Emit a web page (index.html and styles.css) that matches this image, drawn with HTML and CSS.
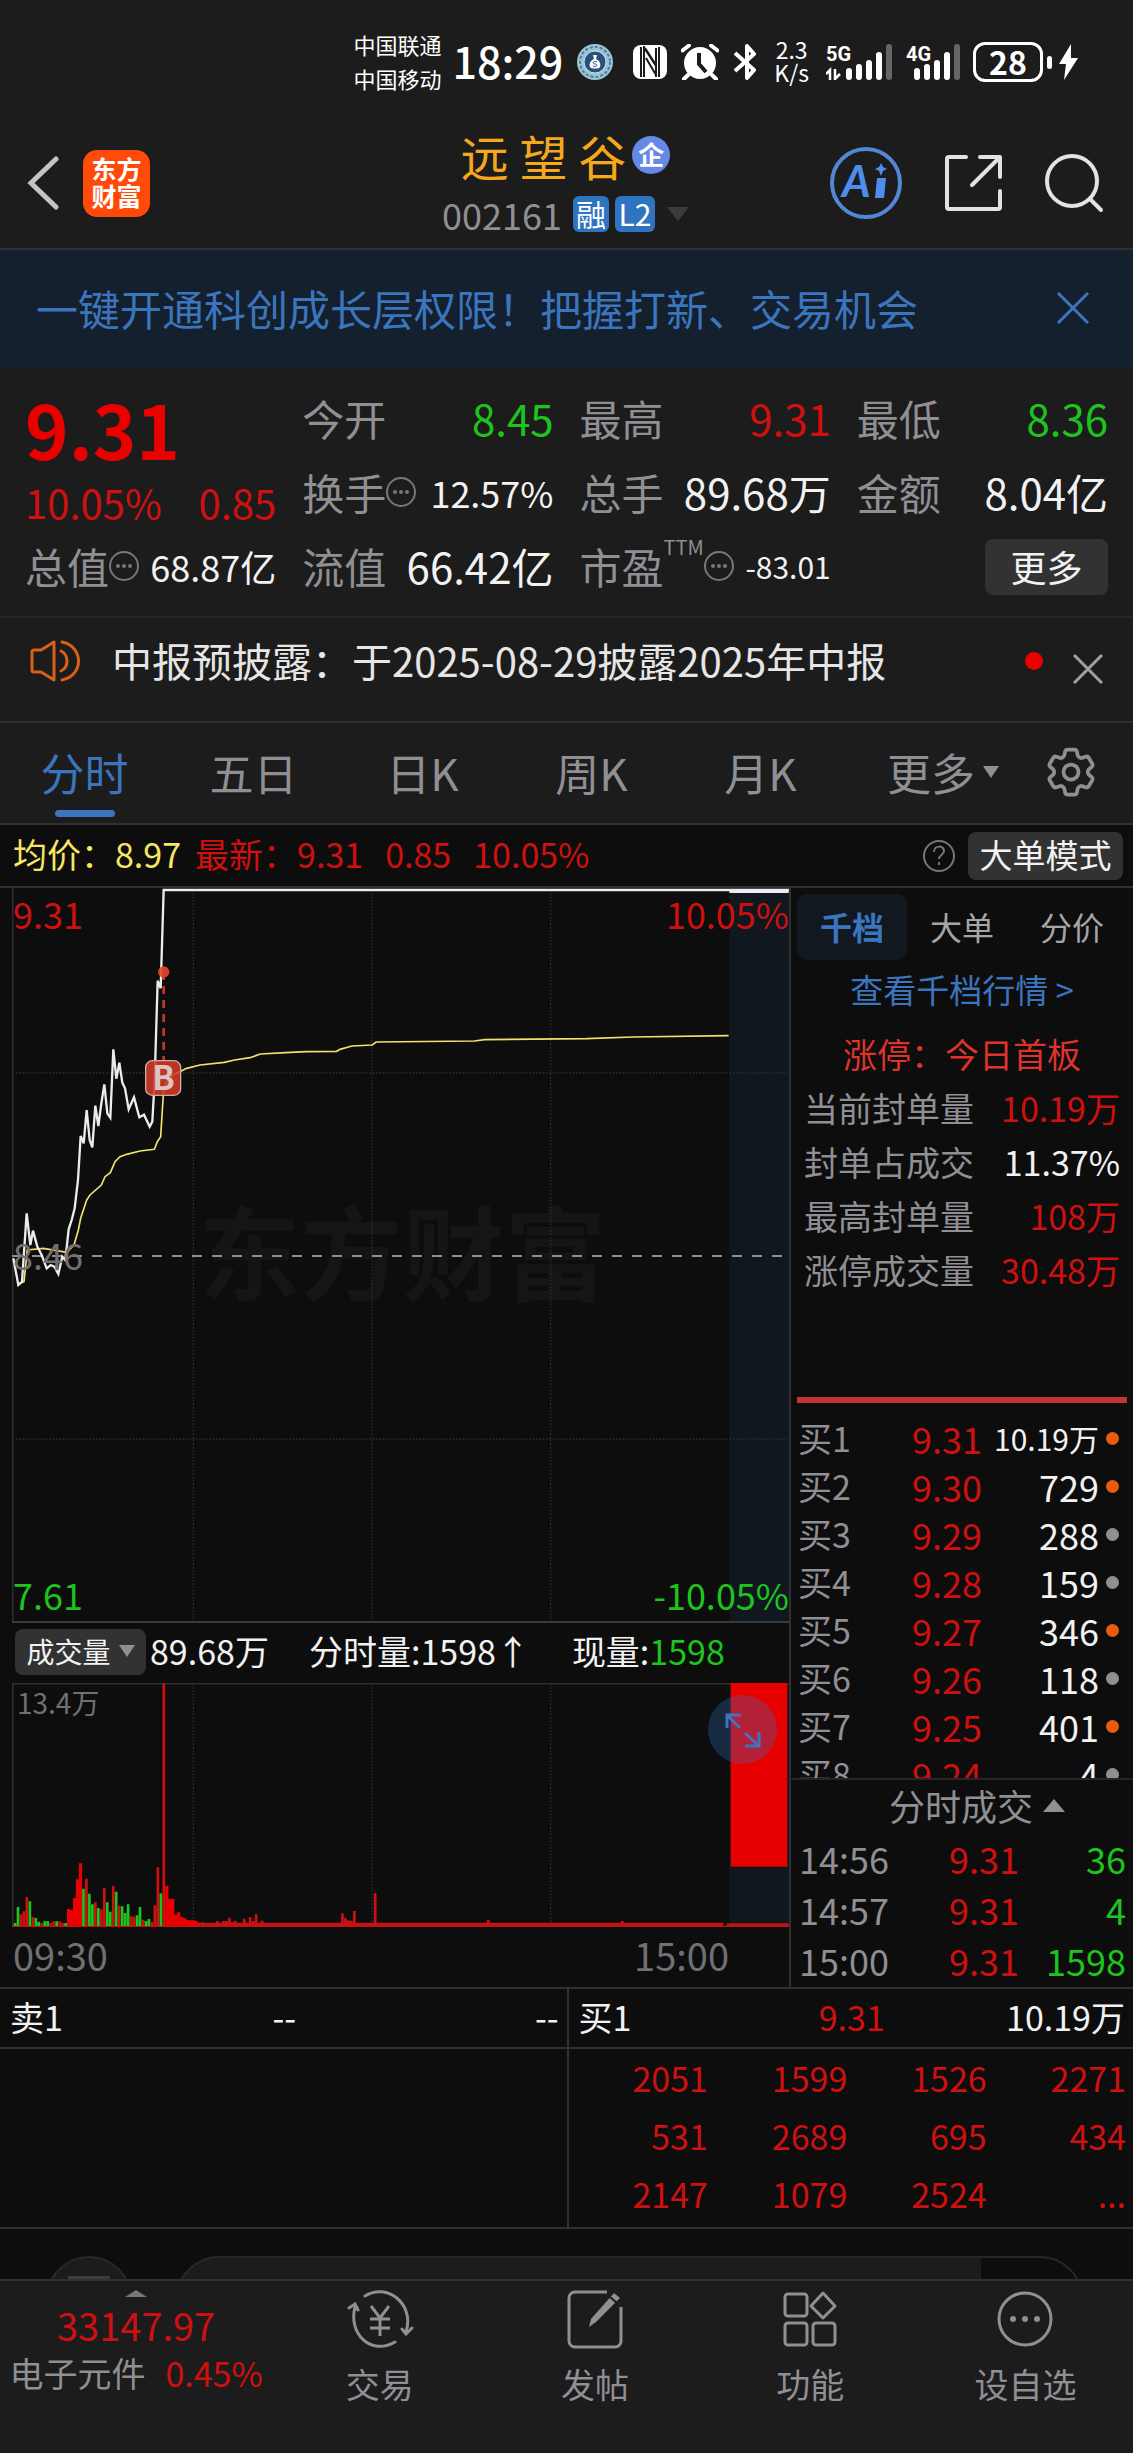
FILE: index.html
```html
<!DOCTYPE html>
<html lang="zh-CN">
<head>
<meta charset="utf-8">
<meta name="viewport" content="width=device-width, initial-scale=1">
<title>远望谷 002161</title>
<link rel="stylesheet" href="styles.css">
</head>
<body>
<div class="status">
  <div class="carriers"><span>中国联通</span><span>中国移动</span></div>
  <span class="clock">18:29</span>
  <svg class="st-badge" width="38" height="38" viewBox="0 0 38 38"><circle cx="19" cy="19" r="18" fill="#9cc4d6"/><circle cx="19" cy="19" r="15" fill="none" stroke="#4a7f9e" stroke-width="2" stroke-dasharray="3 2"/><circle cx="19" cy="19" r="11" fill="#2b4f7d" stroke="#cfe3ee" stroke-width="1"/><path d="M17 12h4l-1 4c4 2 5 5 4 8-1 2-9 2-10 0-1-3 0-6 4-8z" fill="#fff"/><path d="M21 19c-4-2-5 2-2 2s2 4-2 2" fill="none" stroke="#2b4f7d" stroke-width="1"/></svg>
  <svg class="st-nfc" width="34" height="34" viewBox="0 0 34 34"><rect width="34" height="34" rx="8" fill="#fff"/><path d="M8 2v30M26 2v30" stroke="#1c1c1c" stroke-width="2"/><path d="M11 1v31M12 4l11 17v11" stroke="#1c1c1c" stroke-width="2" fill="none"/><path d="M13 13l10 17M12 3l11 17V3" stroke="#1c1c1c" stroke-width="2" fill="none"/></svg>
  <svg class="st-alarm" width="38" height="36" viewBox="0 0 38 36"><circle cx="19" cy="19" r="16" fill="#fff"/><path d="M1.500 6.500L8 1.500M36.500 6.500L30 1.500M7 31l-4 4M31 31l4 4" stroke="#fff" stroke-width="4" stroke-linecap="round"/><path d="M18 9v11l7 8" fill="none" stroke="#1c1c1c" stroke-width="4"/></svg>
  <svg class="st-bt" width="24" height="36" viewBox="0 0 24 36"><path d="M2 9l19 17-7 8V2l7 8L2 27" fill="none" stroke="#fff" stroke-width="4" stroke-linejoin="round"/></svg>
  <div class="speed"><span>2.3</span><span>K/s</span></div>
  <svg class="st-5g" width="66" height="36" viewBox="0 0 66 36"><text x="0" y="17" class="net">5G</text><path d="M0 30l4-4v10M9 25v10l5-5" stroke="#fff" stroke-width="2.500" fill="none"/><g stroke="#fff" stroke-width="6" stroke-linecap="round"><path d="M23 27v6M33 23v10M43 19v14M53 11v22"/><path d="M63 3v30" stroke="#666"/></g></svg>
  <svg class="st-4g" width="54" height="36" viewBox="0 0 54 36"><text x="0" y="17" class="net">4G</text><g stroke="#fff" stroke-width="6" stroke-linecap="round"><path d="M11 27v6M21 23v10M31 19v14M41 11v22"/><path d="M51 3v30" stroke="#666"/></g></svg>
  <div class="battery"><span class="battery-body">28</span><i class="battery-tip"></i></div>
  <svg class="st-bolt" width="19" height="36" viewBox="0 0 19 36"><path d="M12 0L0 20h7L5 36 19 14h-7z" fill="#fff"/></svg>
</div>

<header class="header">
  <div class="header-left">
    <button class="icon-btn" aria-label="返回"><svg width="32" height="54" viewBox="0 0 32 54"><path d="M29 3L4 27l25 24" fill="none" stroke="#c4c4c4" stroke-width="5" stroke-linecap="round"/></svg></button>
    <div class="logo"><span>东方</span><span>财富</span></div>
  </div>
  <div class="stock">
    <h1 class="stock-name">远 望 谷<span class="corp">企</span></h1>
    <div class="stock-code">002161<span class="tag">融</span><span class="tag tag-wide">L2</span><i class="tri tri-dim"></i></div>
  </div>
  <div class="header-right">
    <button class="icon-btn" aria-label="AI"><svg width="72" height="72" viewBox="0 0 72 72"><circle cx="36" cy="36" r="34" fill="none" stroke="#5287d6" stroke-width="4"/><text x="12" y="50" class="ai">A</text><path d="M47 31h9l-2 20h-9z" fill="#4e8ded"/><path d="M51 16l2 4 4 2-4 2-2 5-2-5-4-2 4-2z" fill="#4e8ded"/></svg></button>
    <button class="icon-btn" aria-label="分享"><svg width="58" height="58" viewBox="0 0 58 58"><path d="M22 3H5a2 2 0 0 0-2 2v48a2 2 0 0 0 2 2h49a2 2 0 0 0 2-2V37M36 3h20v20M55 4L28 31" fill="none" stroke="#e3e3e3" stroke-width="4" stroke-linecap="round" stroke-linejoin="round"/></svg></button>
    <button class="icon-btn" aria-label="搜索"><svg width="60" height="60" viewBox="0 0 60 60"><circle cx="28" cy="28" r="25" fill="none" stroke="#e3e3e3" stroke-width="4"/><path d="M46 46l11 11" stroke="#e3e3e3" stroke-width="4" stroke-linecap="round"/></svg></button>
  </div>
</header>

<section class="banner">
  <a href="#open">一键开通科创成长层权限！把握打新、交易机会</a>
  <button class="icon-btn" aria-label="关闭"><svg width="32" height="32" viewBox="0 0 32 32"><path d="M1 1l30 30M31 1L1 31" stroke="#3a75bd" stroke-width="3"/></svg></button>
</section>

<section class="quote">
  <div class="price-block">
    <strong class="price">9.31</strong>
    <div class="change"><span>10.05%</span><span>0.85</span></div>
  </div>
  <div class="cell"><span class="k">今开</span><span class="v down">8.45</span></div>
  <div class="cell"><span class="k">最高</span><span class="v up">9.31</span></div>
  <div class="cell"><span class="k">最低</span><span class="v down">8.36</span></div>
  <div class="cell"><span class="k">换手<svg class="info" width="30" height="30" viewBox="0 0 30 30"><use href="#dots"/></svg></span><span class="v mid">12.57%</span></div>
  <div class="cell"><span class="k">总手</span><span class="v">89.68万</span></div>
  <div class="cell"><span class="k">金额</span><span class="v">8.04亿</span></div>
  <div class="cell"><span class="k">总值<svg class="info" width="30" height="30" viewBox="0 0 30 30"><use href="#dots"/></svg></span><span class="v mid">68.87亿</span></div>
  <div class="cell"><span class="k">流值</span><span class="v">66.42亿</span></div>
  <div class="cell"><span class="k">市盈<small class="ttm">TTM</small><svg class="info" width="30" height="30" viewBox="0 0 30 30"><use href="#dots"/></svg></span><span class="v small">-83.01</span></div>
  <div class="cell cell-end"><button class="more">更多</button></div>
</section>

<section class="notice">
  <svg width="52" height="42" viewBox="0 0 52 42"><path d="M2 12a2 2 0 0 1 2-2h7L24 2v38L11 32H4a2 2 0 0 1-2-2zM31 11c8 4 8 16 0 20M32 2c22 4 22 34 0 38" fill="none" stroke="#d9601a" stroke-width="3" stroke-linecap="round" stroke-linejoin="round"/></svg>
  <p class="notice-text">中报预披露：于2025-08-29披露2025年中报</p>
  <i class="red-dot"></i>
  <button class="icon-btn notice-close" aria-label="关闭"><svg width="30" height="30" viewBox="0 0 30 30"><path d="M1 1l28 28M29 1L1 29" stroke="#a0a0a0" stroke-width="3"/></svg></button>
</section>

<nav class="tabs">
  <button class="tab tab-on">分时</button>
  <button class="tab">五日</button>
  <button class="tab">日K</button>
  <button class="tab">周K</button>
  <button class="tab">月K</button>
  <button class="tab tab-more">更多<i class="tri tri-tab"></i></button>
  <button class="tab tab-gear" aria-label="设置"><svg width="60" height="60" viewBox="0 0 24 24" fill="none" stroke="#8f8f94" stroke-width="1.500"><path d="M9.594 3.940c.09-.542.56-.94 1.110-.94h2.593c.55 0 1.020.398 1.110.94l.213 1.281c.063.374.313.686.645.87.074.04.147.083.22.127.325.196.72.257 1.075.124l1.217-.456a1.125 1.125 0 0 1 1.370.49l1.296 2.247a1.125 1.125 0 0 1-.26 1.431l-1.003.827c-.293.241-.438.613-.43.992a7.723 7.723 0 0 1 0 .255c-.008.378.137.75.43.991l1.004.827c.424.35.534.955.26 1.430l-1.298 2.247a1.125 1.125 0 0 1-1.369.491l-1.217-.456c-.355-.133-.75-.072-1.076.124a6.470 6.470 0 0 1-.22.128c-.331.183-.581.495-.644.869l-.213 1.281c-.09.543-.56.94-1.110.94h-2.594c-.55 0-1.019-.398-1.110-.94l-.213-1.281c-.062-.374-.312-.686-.644-.87a6.520 6.520 0 0 1-.22-.127c-.325-.196-.72-.257-1.076-.124l-1.217.456a1.125 1.125 0 0 1-1.369-.49l-1.297-2.247a1.125 1.125 0 0 1 .26-1.431l1.004-.827c.292-.24.437-.613.43-.991a6.932 6.932 0 0 1 0-.255c.007-.38-.138-.751-.43-.992l-1.004-.827a1.125 1.125 0 0 1-.26-1.430l1.297-2.247a1.125 1.125 0 0 1 1.370-.491l1.216.456c.356.133.751.072 1.076-.124.072-.044.146-.086.22-.128.332-.183.582-.495.644-.869l.214-1.280Z"/><circle cx="12" cy="12" r="3"/></svg></button>
</nav>

<section class="summary">
  <span class="avg">均价：8.97</span>
  <span class="last"><span>最新：9.31</span><span>0.85</span><span>10.05%</span></span>
  <svg class="help" width="34" height="34" viewBox="0 0 34 34"><circle cx="17" cy="17" r="15" fill="none" stroke="#77777a" stroke-width="2"/><path d="M12 13c0-7 10-7 10-1 0 4-5 4-5 8M17 23v3" fill="none" stroke="#77777a" stroke-width="2"/></svg>
  <button class="mode">大单模式</button>
</section>

<main class="board">
  <section class="charts">
    <div class="chart">
      <span class="watermark">东方财富</span>
      <svg class="plot" viewBox="36 24 2331 2205">
        <rect x="2188" y="24" width="179" height="2202" fill="#10171f"/>
        <g stroke="#2c2c2e" stroke-width="4" stroke-dasharray="5 5"><path d="M580 30v2196M1116 30v2196M1652 30v2196M38 579h2328M38 1677h2328"/></g>
        <path d="M38 24v2202" stroke="#2f2f31" stroke-width="5"/>
        <path d="M36 2226h2331" stroke="#3a3a3c" stroke-width="6"/>
        <path d="M36 1128h2331" stroke="#8f8f8f" stroke-width="6" stroke-dasharray="30 30"/>
        <path d="M60 1210L72 1205 82 1110 130 1105 200 1117 222 1095 235 1050 242 1015 260 960 270 945 304 915 315 890 331 878 345 845 360 830 380 823 420 813 463 808 472 785 482 770 487 690 491 630 500 605 520 585 560 565 600 555 673 547 704 540 750 533 781 522 857 518 918 515 1010 514 1020 508 1056 498 1117 495 1128 486 1423 483 1454 479 1760 476 1898 471 2186 467" fill="none" stroke="#efe36c" stroke-width="5"/>
        <path d="M40 1135L55 1215 66 1205 80 1000 91 1095 99 1052 112 1100 125 1125 140 1165 152 1155 163 1160 175 1182 187 1130 196 1140 206 1048 215 1020 224 985 234 900 242 768 251 790 260 690 269 780 277 802 286 677 295 738 304 670 313 613 322 700 331 713 340 508 349 596 358 548 367 608 375 625 386 688 402 652 418 712 432 704 449 740 457 725 464 600 473 302 482 325 491 30H2366" fill="none" stroke="#ececec" stroke-width="7"/>
        <path d="M2188 33h178" stroke="#ececec" stroke-width="12"/>
        <path d="M491 290v250" stroke="#bf3a2c" stroke-width="8" stroke-dasharray="24 18" stroke-dashoffset="14"/>
        <circle cx="491" cy="276" r="17" fill="#e8452f" opacity=".9"/>
        <rect x="437" y="542" width="105" height="104" rx="20" fill="#d23b29" fill-opacity=".88" stroke="#d8a8a0" stroke-width="4"/>
      </svg>
      <span class="mark-b">B</span>
      <span class="lab lab-tl up">9.31</span>
      <span class="lab lab-tr up">10.05%</span>
      <span class="lab lab-ml">8.46</span>
      <span class="lab lab-bl down">7.61</span>
      <span class="lab lab-br down">-10.05%</span>
    </div>
    <div class="vol-head">
      <button class="vol-pick">成交量<i class="tri tri-vol"></i></button>
      <span>89.68万</span><span class="vol-min">分时量:1598↑</span><span>现量:<b class="down">1598</b></span>
    </div>
    <div class="chart">
      <svg class="plot" viewBox="36 12 2331 732">
        <rect x="2188" y="12" width="179" height="729" fill="#10171f"/>
        <g stroke="#2c2c2e" stroke-width="4" stroke-dasharray="5 5"><path d="M580 14v720M1116 14v720M1652 14v720"/></g>
        <path d="M36 14h2331M38 12v729" stroke="#2f2f31" stroke-width="5"/>
        <path d="M594 736H2170M2180 738h186" stroke="#c01414" stroke-width="10"/>
        <path d="M36 742h2331" stroke="#c01414" stroke-width="4"/>
        <rect x="2192" y="12" width="170" height="551" fill="#e60000"/>
        <g transform="translate(45 741) scale(8.930 -1)" fill="none" stroke-width=".9">
          <path stroke="#d01010" d="M2 0V35M3 0V44M4 0V87M6 0V27M9 0V9M12 0V9M13 0V14M15 0V14M16 0V9M24 0V142M27 0V71M29 0V50M30 0V115M33 0V120M35 0V61M39 0V29M40 0V28M43 0V19M46 0V12M47 0V62M48 0V176M50 0V728M63 0V11M68 0V15M70 0V15M71 0V15M72 0V25M73 0V12M74 0V16M77 0V22M79 0V26M80 0V15M81 0V35M83 0V16M110 0V38M111 0V24M112 0V17M113 0V16M114 0V45M121 0V98M159 0V18M204 0V15"/>
          <path stroke="#ea0000" stroke-width="1.100" d="M18 0V51M19 0V48M20 0V84M21 0V140M22 0V188M51 0V121M52 0V81M53 0V81M54 0V34M55 0V41M56 0V27M57 0V23M58 0V18M59 0V17M60 0V17M61 0V14"/>
          <path stroke="#1ec41e" d="M0 0V9M1 0V57M5 0V74M7 0V24M8 0V13M10 0V15M11 0V15M14 0V14M17 0V9M23 0V112M25 0V97M26 0V65M28 0V54M31 0V71M32 0V43M34 0V103M36 0V59M37 0V39M38 0V65M41 0V32M42 0V57M44 0V15M45 0V21M49 0V98"/>
        </g>
      </svg>
      <span class="vol-max">13.4万</span>
      <button class="expand" aria-label="展开"><svg width="69" height="69" viewBox="0 0 69 69"><path d="M19 33V20h14M20 21l12 12M51 37v14H37M50 50L37 38" fill="none" stroke="#3d74bd" stroke-width="3"/></svg></button>
    </div>
    <div class="axis"><span>09:30</span><span>15:00</span></div>
  </section>

  <aside class="side">
    <div class="side-tabs"><button class="side-tab side-on">千档</button><button class="side-tab">大单</button><button class="side-tab">分价</button></div>
    <a class="deep" href="#depth">查看千档行情 &gt;</a>
    <p class="limit">涨停：今日首板</p>
    <dl class="stats">
      <div><dt>当前封单量</dt><dd class="up">10.19万</dd></div>
      <div><dt>封单占成交</dt><dd>11.37%</dd></div>
      <div><dt>最高封单量</dt><dd class="up">108万</dd></div>
      <div><dt>涨停成交量</dt><dd class="up">30.48万</dd></div>
    </dl>
    <div class="ratio"></div>
    <div class="bids">
      <table>
        <tr><th>买1</th><td class="up">9.31</td><td class="big">10.19万</td><td><i class="dot hot"></i></td></tr>
        <tr><th>买2</th><td class="up">9.30</td><td>729</td><td><i class="dot hot"></i></td></tr>
        <tr><th>买3</th><td class="up">9.29</td><td>288</td><td><i class="dot"></i></td></tr>
        <tr><th>买4</th><td class="up">9.28</td><td>159</td><td><i class="dot"></i></td></tr>
        <tr><th>买5</th><td class="up">9.27</td><td>346</td><td><i class="dot hot"></i></td></tr>
        <tr><th>买6</th><td class="up">9.26</td><td>118</td><td><i class="dot"></i></td></tr>
        <tr><th>买7</th><td class="up">9.25</td><td>401</td><td><i class="dot hot"></i></td></tr>
        <tr><th>买8</th><td class="up">9.24</td><td>4</td><td><i class="dot"></i></td></tr>
      </table>
    </div>
    <button class="ticks-head">分时成交<i class="tri tri-up"></i></button>
    <table class="ticks">
      <tr><th>14:56</th><td class="up">9.31</td><td class="down">36</td></tr>
      <tr><th>14:57</th><td class="up">9.31</td><td class="down">4</td></tr>
      <tr><th>15:00</th><td class="up">9.31</td><td class="down">1598</td></tr>
    </table>
  </aside>
</main>

<section class="queue">
  <div class="queue-side">
    <div class="queue-head"><span>卖1</span><span>--</span><span>--</span></div>
  </div>
  <div class="queue-side queue-buy">
    <div class="queue-head"><span>买1</span><span class="up">9.31</span><span>10.19万</span></div>
    <div class="queue-grid up">
      <span>2051</span><span>1599</span><span>1526</span><span>2271</span>
      <span>531</span><span>2689</span><span>695</span><span>434</span>
      <span>2147</span><span>1079</span><span>2524</span><span>...</span>
    </div>
  </div>
</section>

<div class="peek"><div class="peek-round"><i></i></div><div class="peek-pill"><i></i></div></div>

<footer class="dock">
  <a class="index" href="#index">
    <i class="tri tri-index"></i>
    <span class="index-val up">33147.97</span>
    <span class="index-name">电子元件<b class="up">0.45%</b></span>
  </a>
  <a class="dock-item" href="#trade"><svg width="68" height="60" viewBox="0 0 68 60" fill="none" stroke="#8f8f94" stroke-width="3"><path d="M19 7c22-14 50 8 41 36M49 53C25 67 2 45 9 18M3 19l6-4 3 6M66 39l-6 6-4-5" stroke-linecap="round"/><path d="M25 17l9 12 9-12M34 29v18M24 30h20M24 39h20"/></svg><span>交易</span></a>
  <a class="dock-item" href="#post"><svg width="60" height="60" viewBox="0 0 60 60" fill="none" stroke="#8f8f94" stroke-width="3"><path d="M42 3H10a6 6 0 0 0-6 6v43a6 6 0 0 0 6 6h40a6 6 0 0 0 6-6V18"/><path d="M24 38l2-8L49 4l6 5-24 24z" fill="#8f8f94" stroke="none"/><path d="M45 8l7 6" stroke="#1c1c1c" stroke-width="2"/></svg><span>发帖</span></a>
  <a class="dock-item" href="#tools"><svg width="60" height="60" viewBox="0 0 60 60" fill="none" stroke="#8f8f94" stroke-width="3"><rect x="5" y="5" width="22" height="22" rx="3"/><rect x="5" y="34" width="22" height="22" rx="3"/><rect x="33" y="34" width="22" height="22" rx="3"/><path d="M43 4l12 13-12 12-12-12z" stroke-linejoin="round"/></svg><span>功能</span></a>
  <a class="dock-item" href="#watch"><svg width="60" height="60" viewBox="0 0 60 60"><circle cx="30" cy="30" r="26" fill="none" stroke="#8f8f94" stroke-width="3"/><g fill="#8f8f94"><circle cx="18" cy="30" r="3"/><circle cx="30" cy="30" r="3"/><circle cx="42" cy="30" r="3"/></g></svg><span>设自选</span></a>
</footer>

<svg class="defs" width="0" height="0"><defs><g id="dots"><circle cx="15" cy="15" r="14" fill="none" stroke="#77777a" stroke-width="2"/><g fill="#77777a"><circle cx="9" cy="15" r="2"/><circle cx="15" cy="15" r="2"/><circle cx="21" cy="15" r="2"/></g></g></defs></svg>
</body>
</html>
```
FILE: styles.css
```css
* { box-sizing: border-box; }
body {
  margin: 0;
  background: #0d0d0d;
  color: #f2f2f2;
  font-family: "Noto Sans CJK SC", sans-serif;
  font-size: 34px;
  line-height: 1;
  white-space: nowrap;
}
button {
  margin: 0; padding: 0; border: 0;
  background: none; color: inherit;
  font: inherit; cursor: pointer;
}
a { color: inherit; text-decoration: none; }
h1, p, dl, dd { margin: 0; }
b { font-weight: inherit; }
svg { display: block; flex: none; }
table { width: 100%; border-collapse: collapse; table-layout: fixed; }
th, td { padding: 0 0 4px; font-weight: 400; text-align: right; }
.up { color: #cf1010; }
.down { color: #1ec41e; }
.defs { position: absolute; }
.icon-btn { display: flex; }

/* small triangles */
.tri { flex: none; border: solid transparent; border-width: 0 8px; }
.tri-dim { border-width: 14px 11px 0; border-top-color: #3c3c3c; margin-left: 6px; }
.tri-tab { border-width: 12px 8px 0; border-top-color: #8f8f94; margin-left: 8px; }
.tri-vol { border-width: 12px 8px 0; border-top-color: #8f8f94; margin-left: 8px; }
.tri-up { border-width: 0 11px 13px; border-bottom-color: #8f8f94; margin-left: 10px; }
.tri-index { border-width: 0 11px 7px; border-bottom-color: #77777a; }

/* status bar */
.status {
  display: flex; align-items: center; justify-content: flex-end;
  height: 118px; padding: 6px 55px 0 0;
  background: #1c1c1c; color: #fff;
}
.carriers { display: grid; font-size: 22px; line-height: 34px; margin-right: 11px; padding-bottom: 3px; }
.clock { font-size: 43px; font-weight: 500; margin-right: 13px; padding-bottom: 3px; }
.st-badge { margin-right: 19px; }
.st-nfc { margin-right: 14px; }
.st-alarm { margin-right: 14px; }
.st-bt { margin-right: 17px; }
.speed { display: grid; font-size: 23px; line-height: 23px; text-align: center; margin-right: 17px; padding-bottom: 2px; }
.net { font: 700 20px "Roboto", sans-serif; fill: #fff; }
.st-5g { margin-right: 14px; }
.st-4g { margin-right: 13px; }
.battery { display: flex; align-items: center; gap: 4px; margin-right: 7px; }
.battery-body {
  width: 70px; height: 40px; border: 3px solid #fff; border-radius: 12px;
  font-size: 32px; font-weight: 700; line-height: 32px; text-align: center;
}
.battery-tip { width: 5px; height: 13px; border-radius: 3px; background: #fff; }

/* header */
.header {
  display: grid; grid-template-columns: 1fr auto 1fr; align-items: center;
  height: 132px; padding: 0 29px 0 27px;
  background: #1c1c1c; border-bottom: 2px solid #303032;
}
.header-left { display: flex; align-items: center; gap: 24px; }
.logo {
  display: grid; place-content: center; width: 67px; height: 67px; border-radius: 14px;
  background: #ff4a0a; color: #fff; font-size: 25px; font-weight: 700; line-height: 27px; padding-bottom: 2px;
}
.stock-name {
  display: flex; align-items: center; justify-content: center; gap: 6px;
  font-size: 48px; font-weight: 400; line-height: 62px; color: #f5a81c;
}
.corp {
  width: 38px; height: 38px; border-radius: 50%; background: #6489e6; color: #fff;
  font-size: 26px; font-weight: 700; line-height: 36px; text-align: center;
}
.stock-code {
  display: flex; align-items: center; justify-content: center; gap: 6px;
  font-size: 36px; line-height: 56px; color: #8f8f94;
}
.tag {
  width: 36px; height: 36px; border-radius: 6px; background: #2f74c0; color: #fff;
  font-size: 30px; line-height: 34px; text-align: center; margin-left: 5px;
}
.tag-wide { width: 40px; margin-left: 0; }
.header-right { display: flex; align-items: center; justify-content: flex-end; gap: 42px; }
.ai { font: italic 700 44px "Lato", sans-serif; fill: #4e8ded; }

/* banner */
.banner {
  display: flex; align-items: center; justify-content: space-between;
  height: 118px; padding: 0 44px 2px 36px;
  background: #14202e; color: #3a75bd; font-size: 42px;
}

/* quote */
.quote {
  display: grid; grid-template-columns: repeat(4, 1fr); grid-auto-rows: 74px;
  column-gap: 26px; padding: 14px 25px 12px; background: #1c1c1c;
}
.price-block { grid-row: span 2; }
.price { display: block; font-size: 74px; font-weight: 700; line-height: 92px; color: #eb0000; }
.change { display: flex; justify-content: space-between; font-size: 40px; line-height: 56px; color: #cf1010; }
.cell { display: flex; align-items: center; justify-content: space-between; min-width: 0; padding-bottom: 3px; }
.cell-end { justify-content: flex-end; padding: 0; }
.k { display: flex; align-items: center; font-size: 42px; color: #8f8f94; }
.v { font-size: 42px; }
.mid { font-size: 36px; }
.small { font-size: 30px; }
.ttm { align-self: flex-start; font-size: 20px; line-height: 20px; margin-top: -8px; }
.more { width: 123px; height: 56px; padding-bottom: 3px; border-radius: 8px; background: #323232; font-size: 36px; }

/* notice */
.notice {
  display: flex; align-items: center;
  height: 105px; padding: 0 30px 18px;
  background: #1c1c1c; border-top: 2px solid #262628;
}
.notice-text { flex: 1; margin-left: 30px; padding-bottom: 2px; font-size: 40px; color: #e6e6e6; }
.red-dot { width: 18px; height: 18px; border-radius: 50%; background: #eb0000; margin-right: 30px; }
.notice-close { padding-top: 16px; }

/* period tabs */
.tabs {
  display: flex; height: 104px; background: #1c1c1c; color: #8f8f94; font-size: 44px;
  border-top: 2px solid #303032; border-bottom: 2px solid #303032;
}
.tab { flex: 169; display: flex; align-items: center; justify-content: center; min-width: 0; padding-bottom: 2px; }
.tab-on { position: relative; color: #3a75bd; }
.tab-on::after {
  content: ""; position: absolute; left: 50%; bottom: 6px; width: 60px; height: 7px;
  margin-left: -30px; border-radius: 4px; background: #3a75bd;
}
.tab-more { flex: 196; }
.tab-gear { flex: 92; justify-content: flex-start; }

/* price summary */
.summary { display: flex; align-items: center; height: 63px; padding: 0 10px 0 13px; border-bottom: 2px solid #303032; }
.avg { color: #f5e663; margin-right: 14px; padding-bottom: 3px; }
.last { display: flex; flex: 1; gap: 22px; color: #cf1010; padding-bottom: 3px; }
.help { margin-right: 12px; }
.mode { width: 155px; height: 48px; padding-bottom: 2px; border-radius: 8px; background: #323232; font-size: 33px; }

/* charts */
.board { display: grid; grid-template-columns: 791fr 342fr; border-bottom: 2px solid #303032; }
.charts { border-right: 2px solid #303032; min-width: 0; }
.chart { position: relative; margin-left: 12px; }
.plot { position: relative; width: 100%; height: auto; }
.lab { position: absolute; font-size: 36px; line-height: 40px; }
.lab-tl { left: 1px; top: 5px; }
.lab-tr { right: 0; top: 5px; }
.lab-ml { left: 1px; top: 50%; transform: translateY(-22px); color: #707072; }
.lab-bl { left: 1px; bottom: 9px; }
.lab-br { right: 0; bottom: 9px; }
.mark-b {
  position: absolute; left: 134px; top: 171px; width: 35px;
  font-size: 33px; font-weight: 700; line-height: 35px; text-align: center; color: #dcc4c0;
}
.watermark {
  position: absolute; left: 24%; top: 41%;
  font-size: 102px; font-weight: 700; line-height: 120px; color: #151515;
}
.vol-head { display: flex; align-items: center; height: 60px; padding: 0 0 2px 15px; gap: 4px; }
.vol-head span { padding-bottom: 2px; }
.vol-pick {
  display: flex; align-items: center; justify-content: center;
  width: 131px; height: 46px; padding-bottom: 2px; border-radius: 8px; background: #323232; font-size: 28px;
}
.vol-min { margin: 0 38px 0 36px; }
.vol-max { position: absolute; left: 5px; top: 3px; font-size: 28px; line-height: 32px; color: #707072; }
.expand {
  position: absolute; right: 12px; top: 12px; width: 69px; height: 69px; border-radius: 50%;
  background: rgba(47, 120, 200, .28);
}
.axis { display: flex; justify-content: space-between; padding: 0 60px 4px 13px; font-size: 38px; line-height: 56px; color: #707072; }

/* order book */
.side { display: flex; flex-direction: column; min-width: 0; }
.side-tabs { display: grid; grid-template-columns: repeat(3, 1fr); padding: 6px 6px 0; color: #a6a6a8; }
.side-tab { height: 66px; padding-bottom: 3px; border-radius: 10px; font-size: 32px; }
.side-on { background: #111820; color: #3a75bd; font-weight: 700; }
.deep { font-size: 33px; line-height: 58px; text-align: center; color: #3a75bd; }
.limit { margin-top: 6px; line-height: 60px; text-align: center; color: #dd332c; }
.stats { margin-top: -3px; padding: 0 13px; line-height: 54px; }
.stats div { display: flex; justify-content: space-between; }
.stats dt { color: #8f8f94; }
.ratio { height: 6px; margin: 100px 6px 0; background: #c03535; }
.bids { flex: 1 1 0; min-height: 0; margin-top: 13px; overflow: hidden; padding: 0 14px 0 7px; font-size: 36px; }
.bids tr { height: 48px; }
.bids th { width: 64px; text-align: left; font-size: 34px; color: #8f8f94; }
.bids td:nth-child(2) { width: 120px; }
.bids td:nth-child(4) { width: 20px; }
.bids .big { font-size: 30px; }
.dot { display: block; width: 13px; height: 13px; margin-left: auto; border-radius: 50%; background: #8f8f94; }
.dot.hot { background: #ea5b0c; }
.ticks-head {
  display: flex; align-items: center; justify-content: center;
  height: 56px; padding: 0 0 4px 30px; font-size: 36px; color: #8f8f94; border-top: 2px solid #262628;
}
.ticks { font-size: 36px; }
.ticks tr { height: 51px; }
.ticks th { text-align: left; padding-left: 8px; color: #8f8f94; }
.ticks td:last-child { padding-right: 7px; }

/* queue */
.queue { display: grid; grid-template-columns: 1fr 1fr; border-bottom: 2px solid #303032; }
.queue-buy { border-left: 2px solid #303032; }
.queue-head {
  display: grid; grid-template-columns: 1fr auto 1fr; align-items: center;
  height: 60px; padding: 0 8px 3px 10px; border-bottom: 2px solid #303032;
}
.queue-head span:last-child { text-align: right; }
.queue-grid { display: grid; grid-template-columns: repeat(4, 1fr); padding: 0 7px 4px 0; line-height: 58px; text-align: right; }

/* partly hidden input bar */
.peek { display: flex; gap: 44px; height: 50px; padding: 27px 50px 0 46px; overflow: hidden; }
.peek-round, .peek-pill { height: 86px; border: 2px solid #28282a; border-radius: 43px; background: #1c1c1c; overflow: hidden; }
.peek-round { width: 86px; flex: none; }
.peek-round i { display: block; width: 42px; height: 3px; margin: 18px auto 0; background: #3c3c3c; }
.peek-pill { flex: 1; display: flex; justify-content: flex-end; }
.peek-pill i { width: 100px; background: #0d0d0d; }

/* dock */
.dock { display: flex; height: 177px; background: #1c1c1c; border-top: 2px solid #303032; color: #8f8f94; }
.index { flex: 272; display: flex; flex-direction: column; align-items: center; min-width: 0; padding-top: 9px; }
.index-val { font-size: 38px; line-height: 56px; }
.index-name { display: flex; gap: 20px; line-height: 40px; }
.dock-item { flex: 215; display: flex; flex-direction: column; align-items: center; min-width: 0; padding-top: 8px; }
.dock-item span { line-height: 46px; margin-top: 12px; }
```
